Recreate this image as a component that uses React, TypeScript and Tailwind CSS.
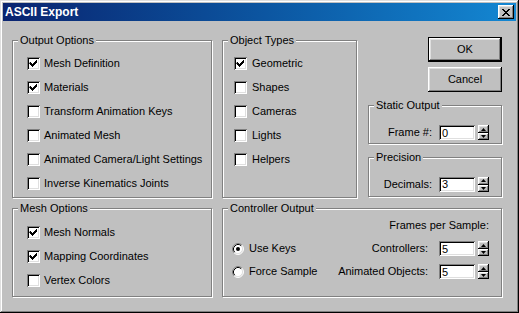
import React from "react";

const raised =
  "shadow-[inset_-1px_-1px_0_#000,inset_1px_1px_0_#fff,inset_-2px_-2px_0_#808080,inset_2px_2px_0_#dfdfdf]";
const sunken =
  "shadow-[inset_1px_1px_0_#808080,inset_-1px_-1px_0_#fff,inset_2px_2px_0_#000,inset_-2px_-2px_0_#dfdfdf]";

const Group = ({ title, className, children }: { title: string; className: string; children?: React.ReactNode }) => (
  <div className={`relative border border-[#808080] shadow-[1px_1px_0_#fff,inset_1px_1px_0_#fff] ${className}`}>
    <span className="absolute -top-[8px] left-[5px] bg-[#c0c0c0] px-[2px] leading-[14px]">{title}</span>
    {children}
  </div>
);

const Check = ({ label, checked = false, gap = "ml-[4px]" }: { label: string; checked?: boolean; gap?: string }) => (
  <div className="flex h-[24px] items-center">
    <div className={`relative h-[13px] w-[13px] bg-white ${sunken}`}>
      {checked && (
        <svg className="absolute left-0 top-0" width="13" height="13" viewBox="0 0 13 13">
          <path d="M3 5h1v1h1v1h1v-1h1v-1h1v-1h1v-1h1v3h-1v1h-1v1h-1v1h-1v1h-1v-1h-1v-1h-1v-1h-1z" fill="#000" />
        </svg>
      )}
    </div>
    <span className={gap}>{label}</span>
  </div>
);

const Radio = ({ label, checked = false }: { label: string; checked?: boolean }) => (
  <div className="flex items-center">
    <svg width="12" height="12" viewBox="0 0 12 12">
      <circle cx="6" cy="6" r="5" fill="#fff" />
      <path d="M2.11 9.89A5.5 5.5 0 0 1 9.89 2.11" stroke="#808080" fill="none" />
      <path d="M9.89 2.11A5.5 5.5 0 0 1 2.11 9.89" stroke="#fff" fill="none" />
      <path d="M2.82 9.18A4.5 4.5 0 0 1 9.18 2.82" stroke="#000" fill="none" />
      <path d="M9.18 2.82A4.5 4.5 0 0 1 2.82 9.18" stroke="#dfdfdf" fill="none" />
      {checked && <circle cx="6" cy="6" r="2" fill="#000" />}
    </svg>
    <span className="ml-[5px]">{label}</span>
  </div>
);

const Spinner = () => (
  <div className="ml-[3px] flex h-[15px] w-[11px] flex-col">
    <div className={`flex h-[8px] items-center justify-center bg-[#c0c0c0] ${raised}`}>
      <svg width="5" height="3" viewBox="0 0 5 3">
        <path d="M2.5 0L5 3H0z" fill="#000" />
      </svg>
    </div>
    <div className={`flex h-[7px] items-center justify-center bg-[#c0c0c0] ${raised}`}>
      <svg width="5" height="3" viewBox="0 0 5 3">
        <path d="M0 0h5L2.5 3z" fill="#000" />
      </svg>
    </div>
  </div>
);

const NumField = ({ label, value, gap }: { label: string; value: string; gap: string }) => (
  <div className="flex items-center">
    <span className={gap}>{label}</span>
    <div className={`flex h-[15px] w-[36px] items-center bg-white pl-[3px] leading-[12px] ${sunken}`}>{value}</div>
    <Spinner />
  </div>
);

const App = () => {
  return (
    <div className="h-[313px] w-[519px] bg-[#c0c0c0] p-[3px] font-['Liberation_Sans',Arial,sans-serif] text-[11px] text-black shadow-[inset_-1px_-1px_0_#000,inset_1px_1px_0_#dfdfdf,inset_-2px_-2px_0_#808080,inset_2px_2px_0_#fff]">
      {/* Title bar */}
      <div className="flex h-[18px] items-center bg-linear-to-r from-[#0a2470] to-[#1487d2] pl-[2px] pr-[2px]">
        <span className="text-[12px] font-bold text-white">ASCII Export</span>
        <button className={`ml-auto flex h-[14px] w-[16px] items-center justify-center bg-[#c0c0c0] ${raised}`}>
          <svg width="8" height="7" viewBox="0 0 8 7">
            <path d="M0 0h2v1h1v1h2v-1h1v-1h2v1h-1v1h-1v1h-1v1h1v1h1v1h1v1h-2v-1h-1v-1h-2v1h-1v1h-2v-1h1v-1h1v-1h1v-1h-1v-1h-1v-1h-1z" fill="#000" />
          </svg>
        </button>
      </div>

      <div className="flex pl-[9px] pt-[16px]">
        {/* Left column */}
        <div className="flex flex-col">
          <Group title="Output Options" className="mt-[3px] h-[158px] w-[200px] pl-[14px] pt-[10px]">
            <Check label="Mesh Definition" checked />
            <Check label="Materials" checked />
            <Check label="Transform Animation Keys" />
            <Check label="Animated Mesh" />
            <Check label="Animated Camera/Light Settings" />
            <Check label="Inverse Kinematics Joints" />
          </Group>
          <Group title="Mesh Options" className="mt-[10px] h-[89px] w-[200px] pl-[14px] pt-[11px]">
            <Check label="Mesh Normals" checked />
            <Check label="Mapping Coordinates" checked />
            <Check label="Vertex Colors" />
          </Group>
        </div>

        {/* Right part */}
        <div className="ml-[10px] flex w-[280px] flex-col">
          <div className="flex">
            <Group title="Object Types" className="mt-[3px] h-[158px] w-[135px] pl-[11px] pt-[10px]">
              <Check label="Geometric" checked gap="ml-[5px]" />
              <Check label="Shapes" gap="ml-[5px]" />
              <Check label="Cameras" gap="ml-[5px]" />
              <Check label="Lights" gap="ml-[5px]" />
              <Check label="Helpers" gap="ml-[5px]" />
            </Group>

            <div className="ml-[11px] flex w-[134px] flex-col">
              <button className="ml-auto h-[25px] w-[74px] border border-black bg-[#c0c0c0] shadow-[inset_-1px_-1px_0_#000,inset_1px_1px_0_#fff,inset_-2px_-2px_0_#808080,inset_2px_2px_0_#dfdfdf]">
                OK
              </button>
              <button className={`ml-auto mt-[5px] h-[25px] w-[74px] bg-[#c0c0c0] ${raised}`}>Cancel</button>

              <Group title="Static Output" className="mt-[13px] flex h-[39px] justify-end pr-[12px] pt-[16px]">
                <NumField label="Frame #:" value="0" gap="mr-[7px]" />
              </Group>
              <Group title="Precision" className="mt-[13px] flex h-[40px] justify-end pr-[12px] pt-[14px]">
                <NumField label="Decimals:" value="3" gap="mr-[7px]" />
              </Group>
            </div>
          </div>

          <Group title="Controller Output" className="mt-[10px] h-[89px] pl-[9px] pr-[12px] pt-[5px]">
            <div className="flex h-[23px] items-center justify-end">Frames per Sample:</div>
            <div className="flex h-[23px] items-center">
              <Radio label="Use Keys" checked />
              <div className="ml-auto">
                <NumField label="Controllers:" value="5" gap="mr-[11px]" />
              </div>
            </div>
            <div className="flex h-[23px] items-center">
              <Radio label="Force Sample" />
              <div className="ml-auto">
                <NumField label="Animated Objects:" value="5" gap="mr-[11px]" />
              </div>
            </div>
          </Group>
        </div>
      </div>
    </div>
  );
};

export default App;
